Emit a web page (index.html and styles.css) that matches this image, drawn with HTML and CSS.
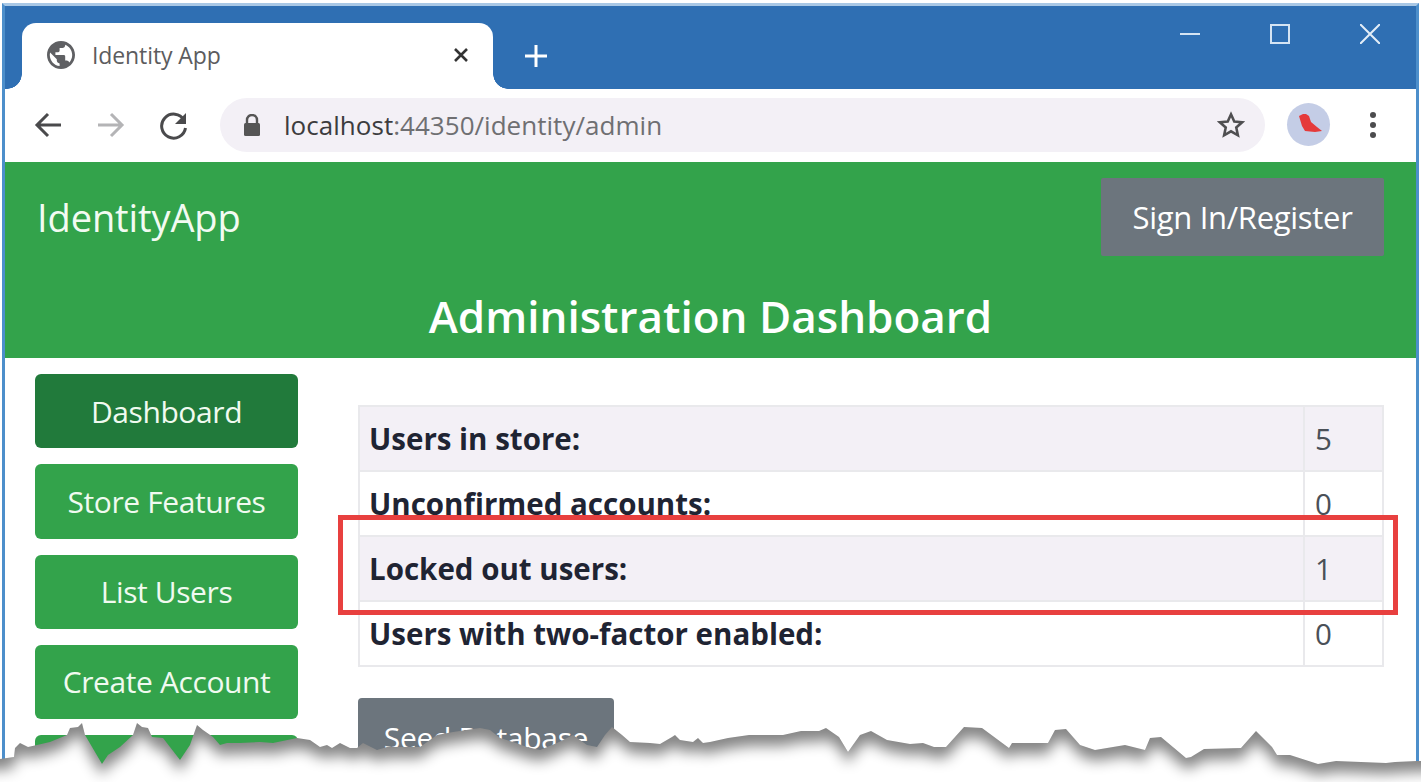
FILE: index.html
```html
<!DOCTYPE html>
<html>
  <head>
    <meta charset="utf-8" />
    <title>Identity App</title>
    <link rel="stylesheet" href="styles.css">
  </head>
  <body>
    <div class="window">
      <!-- Browser chrome -->
      <div class="tabstrip">
        <div class="tab">
          <svg class="globe" width="28" height="28" viewBox="2 2 20 20">
            <path d="M12 2C6.48 2 2 6.48 2 12s4.48 10 10 10 10-4.48 10-10S17.52 2 12 2zm-1 17.93c-3.95-.49-7-3.85-7-7.93 0-.62.08-1.21.21-1.79L9 15v1c0 1.1.9 2 2 2v1.93zm6.9-2.54c-.26-.81-1-1.39-1.9-1.39h-1v-3c0-.55-.45-1-1-1H8v-2h2c.55 0 1-.45 1-1V7h2c1.1 0 2-.9 2-2v-.41c2.93 1.19 5 4.06 5 7.41 0 2.08-.8 3.97-2.1 5.39z" fill="#5f6063" />
          </svg>
          <span class="tab-title">Identity App</span>
          <svg class="tab-close" width="16" height="16" viewBox="0 0 16 16">
            <path d="M2 2l12 12M14 2L2 14" stroke="#333" stroke-width="2.6" />
          </svg>
        </div>
        <svg class="new-tab" width="24" height="24" viewBox="0 0 24 24">
          <path d="M12 1v22M1 12h22" stroke="#fff" stroke-width="3" />
        </svg>
        <div class="window-buttons">
          <svg width="20" height="20" viewBox="0 0 20 20"><path d="M0 10h20" stroke="#d5e4f3" stroke-width="2" /></svg>
          <svg width="20" height="20" viewBox="0 0 20 20"><rect x="1" y="1" width="18" height="18" fill="none" stroke="#d5e4f3" stroke-width="2" /></svg>
          <svg width="20" height="20" viewBox="0 0 20 20"><path d="M0 0l20 20M20 0L0 20" stroke="#e3edf7" stroke-width="2" /></svg>
        </div>
      </div>

      <div class="toolbar">
        <svg class="nav-icon" width="30" height="30" viewBox="0 0 30 30">
          <path d="M28 15H4M15 4L4 15l11 11" fill="none" stroke="#4a4a4c" stroke-width="3" />
        </svg>
        <svg class="nav-icon" width="30" height="30" viewBox="0 0 30 30">
          <path d="M2 15h24M15 4l11 11-11 11" fill="none" stroke="#b4b4b6" stroke-width="3" />
        </svg>
        <svg class="nav-icon" width="30" height="30" viewBox="0 0 30 30">
          <path d="M25 10a12 12 0 1 0 1.5 8" fill="none" stroke="#4a4a4c" stroke-width="3" />
          <path d="M27 3v11H16z" fill="#4a4a4c" />
        </svg>
        <div class="omnibox">
          <svg class="lock" width="18" height="22" viewBox="0 0 18 22">
            <path d="M4 9V6a5 5 0 0 1 10 0v3" fill="none" stroke="#555" stroke-width="2.4" />
            <rect x="1" y="9" width="16" height="13" rx="1.5" fill="#555" />
          </svg>
          <span class="url"><span class="url-host">localhost</span>:44350/identity/admin</span>
          <svg class="star" width="28" height="28" viewBox="0 0 24 24">
            <path d="M12 2.8l2.8 6.2 6.7.7-5 4.5 1.4 6.6-5.9-3.4-5.9 3.4 1.4-6.6-5-4.5 6.7-.7z" fill="none" stroke="#4f4f51" stroke-width="2.2" />
          </svg>
        </div>
        <div class="avatar">
          <svg width="26" height="26" viewBox="0 0 26 26">
            <path d="M3 4L7 2L10 2L13 4L15 10L21 15L26 19L19 20L9 19L6 14z" fill="#e53a3a" />
          </svg>
        </div>
        <div class="menu-dots"><i></i><i></i><i></i></div>
      </div>

      <!-- Page -->
      <header class="page-header">
        <div class="navbar">
          <span class="brand">IdentityApp</span>
          <a class="btn btn-signin">Sign In/Register</a>
        </div>
        <h1 class="page-title">Administration Dashboard</h1>
      </header>

      <div class="content">
        <nav class="sidebar">
          <a class="side-btn active">Dashboard</a>
          <a class="side-btn">Store Features</a>
          <a class="side-btn">List Users</a>
          <a class="side-btn">Create Account</a>
          <a class="side-btn"></a>
        </nav>
        <main class="main">
          <table class="stats">
            <tr class="odd"><th>Users in store:</th><td>5</td></tr>
            <tr><th>Unconfirmed accounts:</th><td>0</td></tr>
            <tr class="odd"><th>Locked out users:</th><td>1</td></tr>
            <tr><th>Users with two-factor enabled:</th><td>0</td></tr>
          </table>
          <a class="btn btn-seed">Seed Database</a>
        </main>
      </div>

      <div class="highlight"></div>
    </div>

    <!-- Torn paper edge along the bottom -->
    <svg class="torn" width="1421" height="782" viewBox="0 0 1421 782">
      <defs>
        <filter id="soft" filterUnits="userSpaceOnUse" x="-60" y="680" width="1560" height="160">
          <feGaussianBlur stdDeviation="7" />
        </filter>
        <path id="tear-shape" d="M-40 800V759L0 759L14 757L15 748L20 743L28 747L37 745L50 742L67 735L70 728L78 727L82 723L85 735L102 764L108 755L120 747L133 735L137 723L142 727L148 728L152 737L163 738L180 760L190 745L197 725L203 730L213 737L220 745L227 743L240 743L260 742L273 743L297 738L310 740L320 747L327 745L332 748L340 743L350 748L357 748L363 743L377 750L387 747L420 747L437 735L453 732L480 728L490 730L500 738L513 742L527 747L540 750L557 743L573 735L587 745L597 747L605 735L612 727L622 735L630 742L650 743L660 744L672 737L675 735L680 740L693 742L698 738L703 743L710 742L728 738L749 735L783 735L801 731L819 731L826 728L839 737L848 752L860 735L871 731L887 740L910 744L923 743L934 747L946 747L964 727L982 728L1009 748L1012 743L1048 743L1055 730L1066 729L1080 745L1095 750L1125 745L1145 750L1150 738L1161 737L1186 758L1191 757L1204 749L1241 748L1256 731L1272 747L1277 755L1290 755L1318 764L1336 761L1386 763L1395 762L1417 761L1460 760V800Z" />
        <clipPath id="tear">
          <use href="#tear-shape" />
        </clipPath>
      </defs>
      <g clip-path="url(#tear)">
        <rect x="0" y="700" width="1421" height="82" fill="#858585" />
        <g filter="url(#soft)">
          <use href="#tear-shape" y="11" fill="#fff" />
        </g>
      </g>
    </svg>
  </body>
</html>
```

FILE: styles.css
```css
/* Basics */
html,
body {
  margin: 0;
  padding: 0;
  height: 100%;
  overflow: hidden;
  background: #fff;
}
* {
  box-sizing: border-box;
}
body {
  font-family: "Open Sans", "Noto Sans", Arial, sans-serif;
  color: #212529;
  position: relative;
}

/* Window */
.window {
  position: relative;
  height: 782px;
  margin: 3px 2px 0 2px;
  border-top: 3px solid #a9c8e6;
  border-left: 3px solid #4d8fcb;
  border-right: 3px solid #4d8fcb;
  background: #fff;
}

/* Tab strip */
.tabstrip {
  display: flex;
  align-items: flex-end;
  height: 83px;
  background: #2f6fb3;
  padding-left: 17px;
}
.tab {
  position: relative;
  display: flex;
  align-items: center;
  width: 471px;
  height: 66px;
  padding: 0 24px 3px 25px;
  background: #fff;
  border-radius: 14px 14px 0 0;
}
.tab::before,
.tab::after {
  content: "";
  position: absolute;
  bottom: 0;
  width: 15px;
  height: 15px;
}
.tab::before {
  left: -15px;
  background: radial-gradient(circle at 0 0, #2f6fb3 14.5px, #fff 15px);
}
.tab::after {
  right: -15px;
  background: radial-gradient(circle at 100% 0, #2f6fb3 14.5px, #fff 15px);
}
.tab-title {
  margin-left: 17px;
  font-size: 23px;
  letter-spacing: -0.1px;
  color: #5c5c5e;
}
.tab-close {
  margin-left: auto;
}
.new-tab {
  margin: 0 0 21px 31px;
}
.window-buttons {
  display: flex;
  gap: 70px;
  margin-left: auto;
  padding: 0 36px 45px 0;
}

/* Toolbar */
.toolbar {
  display: flex;
  align-items: center;
  height: 73px;
  padding: 0 0 2px 28px;
}
.nav-icon {
  margin-right: 33px;
}
.toolbar .nav-icon:nth-child(3) {
  margin-right: 31px;
}
.omnibox {
  display: flex;
  align-items: center;
  width: 1045px;
  height: 54px;
  padding: 0 20px 0 23px;
  background: #f3f0f6;
  border-radius: 27px;
}
.url {
  margin-left: 23px;
  font-size: 26px;
  letter-spacing: 0.03px;
  color: #6f6f72;
}
.url-host {
  color: #3c3c3e;
}
.star {
  margin-left: auto;
}
.avatar {
  display: flex;
  align-items: center;
  justify-content: center;
  width: 43px;
  height: 43px;
  margin-left: 22px;
  background: #c4cde6;
  border-radius: 50%;
}
.menu-dots {
  display: flex;
  flex-direction: column;
  gap: 4px;
  margin-left: 40px;
}
.menu-dots i {
  width: 6px;
  height: 6px;
  background: #4c4c4e;
  border-radius: 50%;
}

/* Page header */
.page-header {
  height: 196px;
  padding: 16px 32px 0 32px;
  background: #33a34b;
  color: #fff;
}
.navbar {
  display: flex;
  align-items: center;
  justify-content: space-between;
}
.brand {
  font-size: 38px;
  letter-spacing: -0.1px;
  color: #f2fbf2;
}
.btn {
  display: flex;
  align-items: center;
  justify-content: center;
  background: #6c757d;
  color: #fff;
  border-radius: 4px;
  font-size: 30px;
  letter-spacing: -0.3px;
}
.btn-signin {
  width: 283px;
  height: 78px;
  border-radius: 2px;
  font-size: 31px;
}
.page-title {
  margin: 31px 0 0;
  text-align: center;
  font-size: 44px;
  font-weight: 600;
  line-height: 58px;
}

/* Content */
.content {
  display: flex;
  padding: 16px 32px 0 30px;
}
.sidebar {
  display: flex;
  flex-direction: column;
  gap: 16px;
  flex: 0 0 263px;
}
.side-btn {
  display: flex;
  align-items: center;
  justify-content: center;
  height: 74.25px;
  background: #33a34b;
  color: #f0faf0;
  border-radius: 6px;
  font-size: 30px;
  letter-spacing: -0.4px;
}
.side-btn.active {
  background: #217a3b;
}
.main {
  flex: 1;
  padding: 31px 0 0 60px;
}

/* Table */
.stats {
  width: 100%;
  border-collapse: collapse;
  font-size: 29.5px;
}
.stats th,
.stats td {
  height: 65px;
  padding: 0 10px;
  border: 2px solid #e9e9ec;
  text-align: left;
}
.stats th {
  padding-left: 9px;
  font-weight: 700;
  color: #1f2433;
}
.stats td {
  width: 79px;
  color: #4a5058;
}
.stats .odd {
  background: #f3f0f6;
}
.btn-seed {
  width: 256px;
  height: 78px;
  margin-top: 31px;
}

/* Red annotation box */
.highlight {
  position: absolute;
  left: 333px;
  top: 509px;
  width: 1060px;
  height: 100px;
  border: 5px solid #e8403f;
}

/* Torn edge overlay */
.torn {
  position: absolute;
  left: 0;
  top: 0;
}
```
